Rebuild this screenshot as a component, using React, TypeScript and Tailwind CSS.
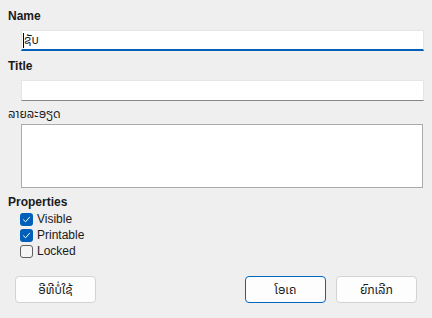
const lao = "font-['Liberation_Sans','Noto_Sans_Lao','Noto_Sans','DejaVu_Sans',sans-serif]";

function Check({ checked, label }: { checked: boolean; label: string }) {
  return (
    <label className="flex items-center h-4 gap-[4px] pl-[12px]">
      {checked ? (
        <span className="w-[13px] h-[13px] rounded-[3px] bg-[#005fb8] flex items-center justify-center">
          <svg width="9" height="9" viewBox="0 0 9 9" fill="none">
            <path d="M1.5 4.8 L3.6 6.8 L7.6 2.2" stroke="white" strokeWidth="1" strokeLinecap="round" strokeLinejoin="round" />
          </svg>
        </span>
      ) : (
        <span className="w-[13px] h-[13px] rounded-[3px] border border-[#5f5f5f] bg-[#f5f5f5]" />
      )}
      <span className="text-[12px] text-[#1a1a1a] leading-4">{label}</span>
    </label>
  );
}

function Btn({ children, primary }: { children: React.ReactNode; primary?: boolean }) {
  return (
    <button
      className={
        primary
          ? "w-[81px] h-[27px] rounded-[4px] bg-[#fdfdfd] border border-[#0067c0] text-[12px] text-[#1a1a1a]"
          : "w-[81px] h-[27px] rounded-[4px] bg-[#fdfdfd] border border-[#d3d3d3] text-[12px] text-[#1a1a1a]"
      }
    >
      {children}
    </button>
  );
}

export default function App() {
  return (
    <main className={`w-[432px] h-[318px] bg-[#efefef] text-[#1a1a1a] ${lao} px-2 pt-2 flex flex-col`}>
      <div className="text-[12px] font-bold leading-4">Name</div>
      <div className="mt-[6px] ml-[13px] w-[403px] h-[21px] bg-white border border-[#e5e5e5] border-b-2 border-b-[#005fb8] flex items-center pl-[1px]">
        <span className="w-[1px] h-[15px] bg-black" />
        <span className="text-[12px] leading-4">ຊັບ</span>
      </div>

      <div className="mt-[7px] text-[12px] font-bold leading-4">Title</div>
      <div className="mt-[6px] ml-[13px] w-[403px] h-[21px] bg-white border border-[#e5e5e5] border-b-[#868686]" />

      <div className="mt-[5px] text-[12px] leading-4 h-[18px]">ລາຍລະອຽດ</div>
      <div className="ml-[13px] w-[402px] h-[64px] bg-white border border-[#ababab]" />

      <div className="mt-[6px] text-[12px] font-bold leading-4">Properties</div>
      <div className="mt-[1px] flex flex-col">
        <Check checked label="Visible" />
        <Check checked label="Printable" />
        <Check checked={false} label="Locked" />
      </div>

      <div className="mt-[17px] flex items-center pl-[7px] pr-[7px]">
        <Btn>ອີທີບໍ່ໃຊ້</Btn>
        <div className="flex-1" />
        <div className="flex gap-[10px]">
          <Btn primary>ໂອເຄ</Btn>
          <Btn>ຍົກເລີກ</Btn>
        </div>
      </div>
    </main>
  );
}
